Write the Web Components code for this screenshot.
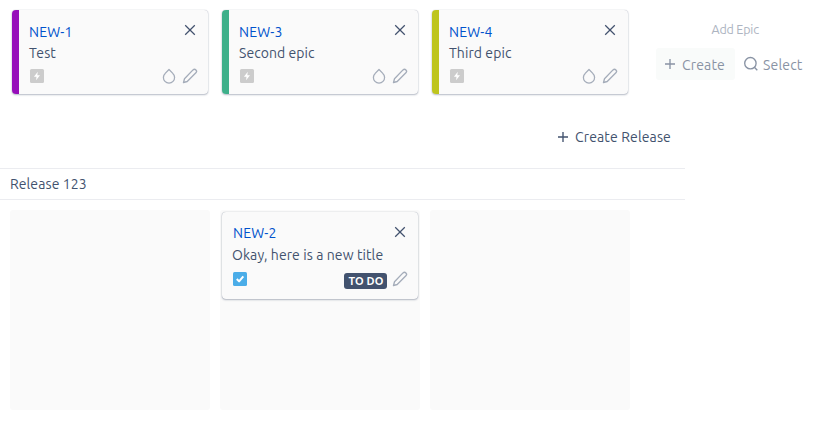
<!DOCTYPE html>
<html lang="en">
<head>
<meta charset="utf-8">
<title>Story map</title>
<style>
html, body { margin: 0; background: #fff; height: 421px; overflow: hidden; }
body { font: 14px/20px Ubuntu, "Noto Sans", sans-serif; color: #42526e; }
</style>
</head>
<body>
<story-map></story-map>
<script>
const ICONS = {
  close: '<path d="M3.2 3.2l9.6 9.6M12.8 3.2l-9.6 9.6" stroke-width="1.25"/>',
  plus: '<path d="M8 3v10M3 8h10" stroke-width="1.35"/>',
  drop: '<path d="M8 1.5L4.2 5.4a5.6 5.6 0 1 0 7.6 0z" stroke-width="1.3"/>',
  pencil: '<path d="M11 1.9a1.9 1.9 0 0 1 2.9 2.9L5.2 13.5l-3.7 1 1-3.7z" stroke-width="1.35"/>',
  search: '<circle cx="7.4" cy="7.2" r="5.7" stroke-width="1.35"/><path d="M11.4 11.3l2.9 3" stroke-width="1.35"/>',
  epic: '<rect x="1" y="1" width="14" height="14" rx="1.5" fill="#ccc" stroke="none"/><path d="M8.8 3.8L4.9 8.7h2.6l-.4 3.6 3.9-5H8.3z" fill="#fff" stroke="none"/>',
  task: '<rect x="1" y="1" width="14" height="14" rx="1.5" fill="#4bade8" stroke="none"/><path d="M4.8 8l2.3 2.4 4.2-5" stroke="#fff" stroke-width="2"/>'
};

class UiIcon extends HTMLElement {
  connectedCallback() {
    this.attachShadow({ mode: 'open' }).innerHTML = `
      <style>:host{display:block;width:16px;height:16px;flex:none}svg{display:block}</style>
      <svg width="16" height="16" viewBox="0 0 16 16" fill="none" stroke="currentColor" stroke-linejoin="round" stroke-linecap="butt">${ICONS[this.getAttribute('name')]}</svg>`;
  }
}

/* A single line of text tracked so that it fills the given width. */
class FitText extends HTMLElement {
  connectedCallback() {
    this.attachShadow({ mode: 'open' }).innerHTML = `
      <style>:host{display:block;white-space:nowrap;flex:none}span{display:inline-block}</style><span></span>`;
    const span = this.shadowRoot.querySelector('span');
    span.textContent = this.getAttribute('text');
    const w = +this.getAttribute('w');
    const natural = span.getBoundingClientRect().width;
    span.style.letterSpacing = (w - natural) / span.textContent.length + 'px';
    this.style.width = w + 'px';
  }
}

class EpicCard extends HTMLElement {
  connectedCallback() {
    const a = n => this.getAttribute(n);
    this.attachShadow({ mode: 'open' }).innerHTML = `
      <style>
      :host{display:flex;box-sizing:border-box;width:196px;height:84px;border-radius:4px;overflow:hidden;background:#fafafa;
        box-shadow:0 1px 2px rgba(9,30,66,.28),0 0 1px rgba(9,30,66,.34)}
      .bar{width:7px;background:${a('color')}}
      .body{flex:1;padding:12px 10px 0}
      .row{display:flex;justify-content:space-between}
      .key{color:#0052cc}
      .title{margin-top:1px}
      .foot{margin-top:5px;height:16px}
      .tools{display:flex;gap:5px;color:#a5adba}
      </style>
      <div class="bar"></div>
      <div class="body">
        <div class="row"><fit-text class="key" text="${a('key')}" w="${a('kw')}"></fit-text><ui-icon name="close"></ui-icon></div>
        <fit-text class="title" text="${a('title')}" w="${a('tw')}"></fit-text>
        <div class="row foot"><ui-icon name="epic"></ui-icon><div class="tools"><ui-icon name="drop"></ui-icon><ui-icon name="pencil"></ui-icon></div></div>
      </div>`;
  }
}

class IssueCard extends HTMLElement {
  connectedCallback() {
    this.attachShadow({ mode: 'open' }).innerHTML = `
      <style>
      :host{display:block;box-sizing:border-box;width:196px;height:87px;padding:11px 10px 0;border-radius:4px;background:#fafafa;
        box-shadow:0 1px 2px rgba(9,30,66,.28),0 0 1px rgba(9,30,66,.4)}
      .row{display:flex;justify-content:space-between}
      .key{color:#0052cc;margin-left:1px}
      .title{margin-top:2px}
      .foot{margin-top:6px}
      .tools{display:flex;gap:5px;color:#a5adba}
      .tag{box-sizing:border-box;width:43px;height:16px;margin-top:2px;padding-left:4.5px;border-radius:3px;background:#42526e;color:#fff;font-size:11px;line-height:16px;font-weight:700}
      .row ui-icon[name=close]{margin-top:1px}
      </style>
      <div class="row"><fit-text class="key" text="NEW-2" w="43.5"></fit-text><ui-icon name="close"></ui-icon></div>
      <fit-text class="title" text="Okay, here is a new title" w="151.2"></fit-text>
      <div class="row foot"><ui-icon name="task"></ui-icon><div class="tools"><div class="tag"><fit-text text="TO DO" w="35"></fit-text></div><ui-icon name="pencil"></ui-icon></div></div>`;
  }
}

class MapColumn extends HTMLElement {
  connectedCallback() {
    this.attachShadow({ mode: 'open' }).innerHTML = `
      <style>:host{display:block;box-sizing:border-box;width:200px;height:200px;padding:2px;border-radius:3px;background:#fafafa}</style><slot></slot>`;
  }
}

class IconButton extends HTMLElement {
  connectedCallback() {
    this.attachShadow({ mode: 'open' }).innerHTML = `
      <style>:host{display:flex;align-items:center;box-sizing:border-box;height:32px;gap:4px;border-radius:3px}:host([icon=plus]) ui-icon{margin-top:var(--icon-shift,0px)}fit-text{margin-top:1px}</style>
      <ui-icon name="${this.getAttribute('icon')}"></ui-icon><fit-text text="${this.getAttribute('label')}" w="${this.getAttribute('w')}"></fit-text>`;
  }
}

class StoryMap extends HTMLElement {
  connectedCallback() {
    this.attachShadow({ mode: 'open' }).innerHTML = `
      <style>
      :host{display:flex;width:819px;height:421px}
      .board{width:685px;flex:none}
      .epics{display:flex;gap:14px;padding:10px 0 0 12px}
      .create{display:flex;justify-content:flex-end;padding:26px 14px 0 0}
      .create icon-button{--icon-shift:1px}
      .release{box-sizing:border-box;height:32px;margin-top:16px;padding:5px 10px 0;border:solid #ebecf0;border-width:1px 0}
      .columns{display:grid;grid-template-columns:repeat(3,200px);column-gap:10px;padding:10px 0 0 10px}
      .add{flex:1;padding-top:19px;color:#8993a4}
      .caption{font-size:12.5px;color:#adb4c1;margin-left:26.5px}
      .buttons{display:flex;gap:8px;margin:9px 0 0 -29px}
      .new{background:#f9fbfa;padding:0 10px 0 6px}
      </style>
      <div class="board">
        <div class="epics">
          <epic-card color="#970fba" key="NEW-1" kw="43.5" title="Test" tw="27"></epic-card>
          <epic-card color="#3eb08a" key="NEW-3" kw="43.5" title="Second epic" tw="75.5"></epic-card>
          <epic-card color="#bec51e" key="NEW-4" kw="43.5" title="Third epic" tw="62.5"></epic-card>
        </div>
        <div class="create"><icon-button icon="plus" label="Create Release" w="96"></icon-button></div>
        <div class="release"><fit-text text="Release 123" w="76.7"></fit-text></div>
        <div class="columns"><map-column></map-column><map-column><issue-card></issue-card></map-column><map-column></map-column></div>
      </div>
      <div class="add">
        <fit-text class="caption" text="Add Epic" w="47.3"></fit-text>
        <div class="buttons"><icon-button class="new" icon="plus" label="Create" w="43"></icon-button><icon-button class="find" icon="search" label="Select" w="39.5"></icon-button></div>
      </div>`;
  }
}

customElements.define('ui-icon', UiIcon);
customElements.define('fit-text', FitText);
customElements.define('epic-card', EpicCard);
customElements.define('issue-card', IssueCard);
customElements.define('map-column', MapColumn);
customElements.define('icon-button', IconButton);
customElements.define('story-map', StoryMap);
</script>
</body>
</html>
